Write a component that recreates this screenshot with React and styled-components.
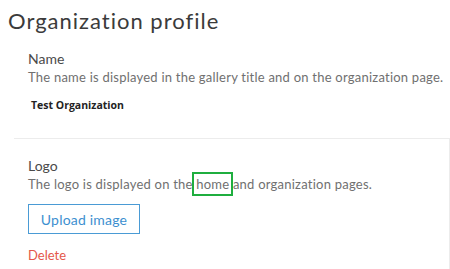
import React from "react";
import styled, { createGlobalStyle } from "styled-components";

const GlobalStyle = createGlobalStyle`
  body {
    margin: 0;
    background: #fff;
    font-family: Lato, "Open Sans", sans-serif;
  }
`;

const Page = styled.div`
  width: 450px;
  height: 269px;
  overflow: hidden;
  padding-top: 7px;
  box-sizing: border-box;
`;

const Title = styled.h1`
  margin: 0 0 0 8px;
  font-size: 22px;
  font-weight: 400;
  letter-spacing: 1px;
  color: #3b3b3b;
  line-height: 27px;
`;

const Section = styled.section`
  margin-left: 14px;
  padding: ${(p) => p.$pad};
  border-bottom: ${(p) => (p.$divider ? "1px solid #ececec" : "none")};
  border-right: ${(p) => (p.$edge ? "1px solid #ececec" : "none")};
`;

const Label = styled.div`
  font-size: 14px;
  color: #4a4a4a;
  line-height: 18px;
`;

const Desc = styled.p`
  margin: 0;
  font-size: 13px;
  letter-spacing: 0.23px;
  color: #707070;
  line-height: 18px;
`;

const Value = styled.div`
  margin: 12px 0 0 3px;
  font-family: "Open Sans", sans-serif;
  font-size: 10.5px;
  font-weight: 700;
  color: #232323;
`;

const Highlight = styled.span`
  outline: 2.5px solid #1fae3f;
  outline-offset: 2px;
`;

const UploadButton = styled.button`
  display: block;
  margin-top: 11px;
  width: 112px;
  height: 30px;
  border: 1.5px solid #4a9bd5;
  background: #fff;
  color: #3d8fd0;
  font-family: Lato, sans-serif;
  font-size: 14px;
  letter-spacing: 0.2px;
  padding: 0;
`;

const DeleteLink = styled.div`
  margin-top: 13px;
  font-size: 13px;
  color: #e4574a;
`;

export default function App() {
  return (
    <Page>
      <GlobalStyle />
      <Title>Organization profile</Title>
      <Section $divider $pad="16px 0 26px 14px">
        <Label>Name</Label>
        <Desc>The name is displayed in the gallery title and on the organization page.</Desc>
        <Value>Test Organization</Value>
      </Section>
      <Section $edge $pad="18px 0 20px 14px">
        <Label>Logo</Label>
        <Desc>
          The logo is displayed on the <Highlight>home</Highlight> and organization pages.
        </Desc>
        <UploadButton>Upload image</UploadButton>
        <DeleteLink>Delete</DeleteLink>
      </Section>
    </Page>
  );
}
